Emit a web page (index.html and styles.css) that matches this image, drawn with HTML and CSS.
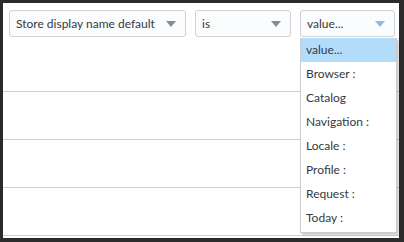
FILE: index.html
```html
<html>
  <head>
    <link rel="stylesheet" href="styles.css">
  </head>
  <body>
    <div class="panel">
      <div class="filters">
        <div class="select wide">
          <span>Store display name default</span>
          <i class="arrow"></i>
        </div>
        <div class="select">
          <span>is</span>
          <i class="arrow"></i>
        </div>
        <div class="select is-open">
          <span>value...</span>
          <i class="arrow"></i>
          <ul class="options">
            <li class="active">value...</li>
            <li>Browser :</li>
            <li>Catalog</li>
            <li>Navigation :</li>
            <li>Locale :</li>
            <li>Profile :</li>
            <li>Request :</li>
            <li>Today :</li>
          </ul>
        </div>
      </div>
      <div class="row"></div>
      <div class="row"></div>
      <div class="row"></div>
    </div>
  </body>
</html>
```

FILE: styles.css
```css
body {
  margin: 0;
  background-color: #2b2b2b;
  font-family: Lato, "Open Sans", sans-serif;
  font-size: 12px;
  color: #333a44;
}
.panel {
  margin: 3px 5px 4px 3px;
  height: 235px;
  background-color: #fff;
}
.filters {
  display: flex;
  gap: 9px;
  height: 81px;
  padding: 7px 6px 0;
  border-bottom: 1px solid #cfcfcf;
}
.select {
  position: relative;
  flex: none;
  display: flex;
  align-items: center;
  justify-content: space-between;
  box-sizing: border-box;
  width: 96px;
  height: 27px;
  padding: 0 9px 0 6px;
  border: 1px solid #cfd2d6;
  border-radius: 3px;
  background-color: #fbfcfd;
  white-space: nowrap;
}
.select.wide {
  width: 177px;
}
.select.is-open {
  width: 95px;
}
.arrow {
  width: 0;
  height: 0;
  border-left: 5px solid transparent;
  border-right: 5px solid transparent;
  border-top: 6px solid #8a8a8a;
}
.is-open .arrow {
  border-top-color: #8cbde6;
}
.options {
  position: absolute;
  top: 27px;
  left: -1px;
  width: 95px;
  margin: 0;
  padding: 0 0 2px;
  list-style: none;
  background-color: #fff;
  border: 1px solid #c9cdd2;
  border-top: none;
  box-shadow: 2px 2px 2px rgba(0, 0, 0, 0.2);
}
.options li {
  height: 24px;
  line-height: 24px;
  padding-left: 5px;
}
.options li.active {
  background-color: #b3dcfb;
}
.row {
  height: 47px;
  border-bottom: 1px solid #cfcfcf;
}
```
